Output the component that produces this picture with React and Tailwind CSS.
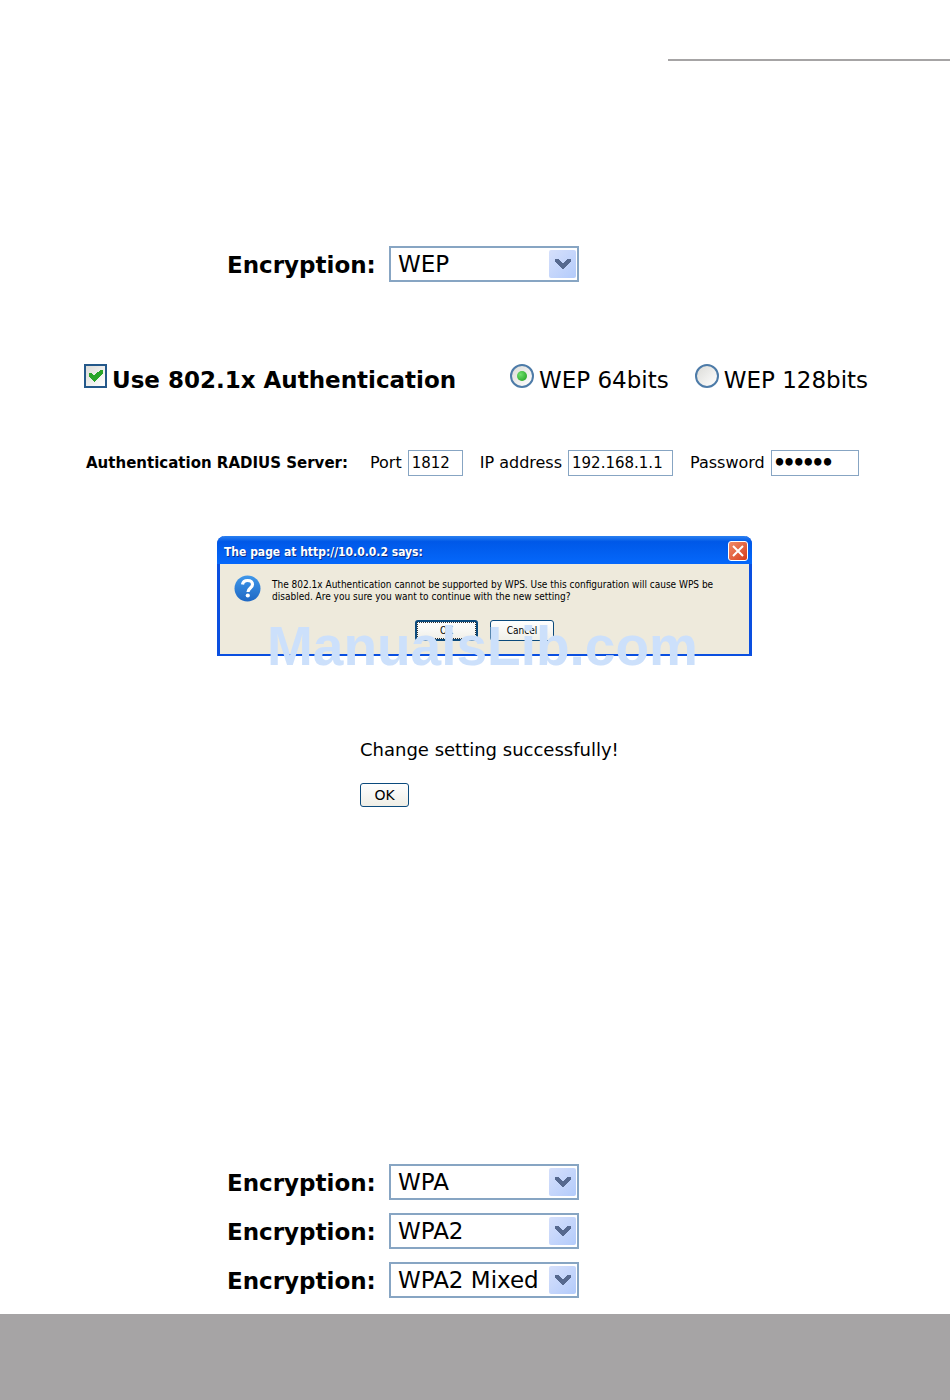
import { useState } from 'react';

const EncryptionRow = ({ id, value, options }) => (
  <div className="flex items-center">
    <label
      htmlFor={id}
      className="w-[162px] shrink-0 whitespace-nowrap pt-[2px] text-[23px] leading-[34px] font-bold"
    >
      Encryption:
    </label>
    <div className="relative w-[190px] h-9">
      <select
        id={id}
        defaultValue={value}
        className="w-full h-full appearance-none rounded-none border-2 border-[#87a5c3] bg-white pl-[7px] text-[23px] leading-8 text-black outline-none"
      >
        {options.map(opt => <option key={opt} value={opt}>{opt}</option>)}
      </select>
      <span className="pointer-events-none absolute right-[3px] top-1 flex h-7 w-[27px] items-center justify-center rounded-xs bg-linear-to-br from-[#d6e0fb] to-[#b3cbfb]">
        <svg width="16" height="12" viewBox="0 0 16 12" fill="#56698f">
          <path d="M0 1h4v1h1v1h1v1h1v1h2V4h1V3h1V2h1V1h4v3h-1v1h-1v1h-1v1h-1v1h-1v1h-1v1H9v1H7v-1H6V9H5V8H4V7H3V6H2V5H1V4H0z" />
        </svg>
      </span>
    </div>
  </div>
);

const BitsRadio = ({ id, label, checked, onChange }) => (
  <div className="flex items-start gap-[5px]">
    <span className="relative block size-6">
      <input
        id={id}
        type="radio"
        name="wep-bits"
        checked={checked}
        onChange={onChange}
        className="block size-6 appearance-none rounded-full border-2 border-[#4d7ba8] bg-linear-to-br from-[#dcdcd8] to-white"
      />
      {checked && (
        <span className="pointer-events-none absolute left-[7px] top-[7px] size-[10px] rounded-full bg-radial-[at_35%_35%] from-[#6fe06c] to-[#1b9a1b]" />
      )}
    </span>
    <label htmlFor={id} className="whitespace-nowrap pt-[2px] text-[23px] leading-7">{label}</label>
  </div>
);

const field = 'h-[26px] rounded-none border border-[#87a5c3] bg-white px-[3px] text-[15px] leading-6 outline-none';

const ConfirmDialog = () => (
  <div
    role="dialog"
    aria-labelledby="dialog-title"
    className="relative flex h-[120px] w-[535px] flex-col rounded-t-lg border-x-[3px] border-b-2 border-[#0a4fe0] bg-[#eeeadc]"
  >
    <div className="-mx-[3px] flex h-7 items-center justify-between rounded-t-lg bg-linear-to-b from-[#2a80f0] via-[#0058e8] via-20% to-[#0568fb] pl-[7px] pr-1 pt-[2px]">
      <h2
        id="dialog-title"
        className="pt-px font-['DejaVu_Sans_Condensed','DejaVu_Sans',sans-serif] text-[12px] leading-4 font-bold text-white text-shadow-[1px_1px_0_#0a2f8c]"
      >
        The page at http://10.0.0.2 says:
      </h2>
      <button
        type="button"
        aria-label="Close"
        className="flex size-5 items-center justify-center rounded-[3px] border border-white bg-linear-to-br from-[#f08a68] to-[#d63a14]"
      >
        <svg width="12" height="12" viewBox="0 0 12 12" stroke="#fff" strokeWidth="2">
          <path d="M1 1l10 10M11 1L1 11" />
        </svg>
      </button>
    </div>
    <div className="flex gap-[11px] pl-[14px] pt-[11px]">
      <svg width="27" height="27" viewBox="0 0 27 27" className="shrink-0">
        <defs>
          <linearGradient id="help" x1="0" y1="0" x2="0" y2="1">
            <stop offset="0" stopColor="#3f97ea" />
            <stop offset="1" stopColor="#1f68c4" />
          </linearGradient>
        </defs>
        <circle cx="13.5" cy="13.5" r="13" fill="url(#help)" />
        <path d="M8.500 9.500C9 6.500 11 5.500 13.500 5.500c3 0 5 1.500 5 4 0 3.500-4.500 3.500-4.500 7.500" fill="none" stroke="#fff" strokeWidth="3.200" />
        <circle cx="13.800" cy="20.500" r="2.100" fill="#fff" />
      </svg>
      <p className="whitespace-nowrap pt-1 font-['DejaVu_Sans_Condensed','DejaVu_Sans',sans-serif] text-[10px] leading-3">
        The 802.1x Authentication cannot be supported by WPS. Use this configuration will cause WPS be<br />
        disabled. Are you sure you want to continue with the new setting?
      </p>
    </div>
    <div className="mt-[17px] flex justify-center gap-3 font-['DejaVu_Sans_Condensed','DejaVu_Sans',sans-serif] text-[10px] leading-3">
      <button type="button" className="h-[21px] w-[63px] rounded-[3px] border-2 border-[#0b4a7c] bg-linear-to-b from-white to-[#f0efe8]">
        <span className="flex h-full items-center justify-center border border-dotted border-[#333]">OK</span>
      </button>
      <button type="button" className="h-[21px] w-16 rounded-[3px] border border-[#0b4a7c] bg-linear-to-b from-white to-[#f0efe8]">
        Cancel
      </button>
    </div>
    <span className="pointer-events-none absolute left-[47px] top-20 font-['Liberation_Sans',Arial,sans-serif] text-[55px] leading-[60px] font-bold text-[#cce0fb]">
      ManualsLib.com
    </span>
  </div>
);

export default function App() {
  const [use8021x, setUse8021x] = useState(true);
  const [bits, setBits] = useState('64');

  return (
    <div className="min-h-screen bg-white font-['DejaVu_Sans',Verdana,sans-serif] text-black">
      <header className="flex justify-end pt-[59px]">
        <div className="h-[2px] w-[282px] bg-[#a6a4a5]" />
      </header>

      <main className="flex flex-col pt-[185px]">
        <section className="pl-[227px]">
          <EncryptionRow id="enc-wep" value="WEP" options={['None', 'WEP', 'WPA', 'WPA2', 'WPA2 Mixed']} />
        </section>

        <section className="mt-[82px] flex items-start pl-[84px]">
          <div className="flex w-[426px] shrink-0 items-start gap-[5px]">
            <span className="relative block h-6 w-[23px]">
              <input
                id="use-8021x"
                type="checkbox"
                checked={use8021x}
                onChange={e => setUse8021x(e.target.checked)}
                className="block h-6 w-[23px] appearance-none border-2 border-[#24588a] bg-linear-to-br from-[#dcdcd8] to-white"
              />
              {use8021x && (
                <svg width="14" height="13" viewBox="0 0 14 13" className="pointer-events-none absolute left-[5px] top-[5px]">
                  <path d="M0 3.500h2l3 3L12 0.500h2v4.500L6 12.500H5L0 8z" fill="#28a428" shapeRendering="crispEdges" />
                </svg>
              )}
            </span>
            <label htmlFor="use-8021x" className="whitespace-nowrap pt-[2px] text-[23px] leading-7 font-bold">
              Use 802.1x Authentication
            </label>
          </div>
          <div className="flex gap-[26px]">
            <BitsRadio id="wep-64" label="WEP 64bits" checked={bits === '64'} onChange={() => setBits('64')} />
            <BitsRadio id="wep-128" label="WEP 128bits" checked={bits === '128'} onChange={() => setBits('128')} />
          </div>
        </section>

        <section className="mt-14 flex items-center pl-[86px] text-[16px] leading-[26px] whitespace-nowrap">
          <h3 className="w-[284px] shrink-0 text-[15px] font-bold">Authentication RADIUS Server:</h3>
          <div className="flex gap-[17px]">
            <div className="flex gap-[6px]">
              <label htmlFor="port">Port</label>
              <input id="port" type="text" defaultValue="1812" className={`${field} w-[55px]`} />
            </div>
            <div className="flex gap-[6px]">
              <label htmlFor="ip">IP address</label>
              <input id="ip" type="text" defaultValue="192.168.1.1" className={`${field} w-[105px]`} />
            </div>
            <div className="flex gap-[6px]">
              <label htmlFor="password">Password</label>
              <input id="password" type="password" defaultValue="secret" className={`${field} w-[88px] font-black [-webkit-text-stroke:2px_black]`} />
            </div>
          </div>
        </section>

        <section className="mt-[60px] pl-[217px]">
          <ConfirmDialog />
        </section>

        <section className="mt-[82px] flex flex-col items-start gap-[21px] pl-[360px]">
          <p className="text-[18px] leading-6">Change setting successfully!</p>
          <button type="button" className="h-6 w-[49px] rounded-[3px] border border-[#0b4a7c] bg-linear-to-b from-white to-[#efeee6] text-[14px] leading-5">
            OK
          </button>
        </section>

        <section className="mt-[357px] flex flex-col gap-[13px] pl-[227px]">
          <EncryptionRow id="enc-wpa" value="WPA" options={['None', 'WEP', 'WPA', 'WPA2', 'WPA2 Mixed']} />
          <EncryptionRow id="enc-wpa2" value="WPA2" options={['None', 'WEP', 'WPA', 'WPA2', 'WPA2 Mixed']} />
          <EncryptionRow id="enc-mixed" value="WPA2 Mixed" options={['None', 'WEP', 'WPA', 'WPA2', 'WPA2 Mixed']} />
        </section>
      </main>

      <footer className="mt-4 h-[86px] bg-[#a6a4a5]" />
    </div>
  );
}
